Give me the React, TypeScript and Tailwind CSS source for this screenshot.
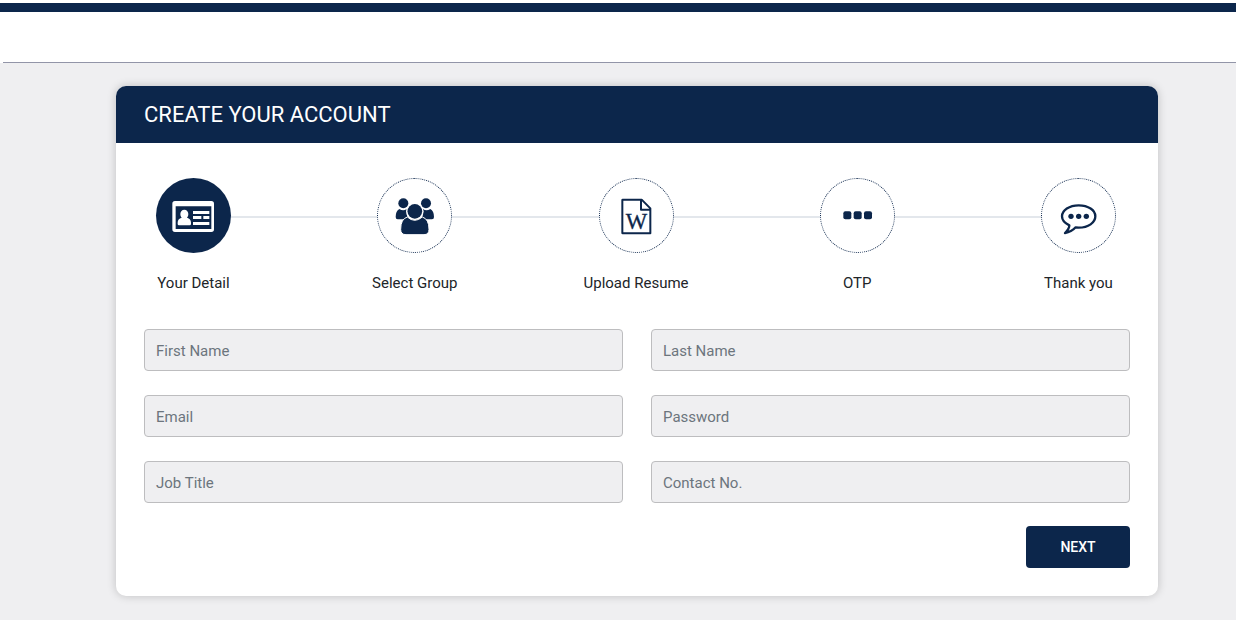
import type { ReactNode } from 'react';

function Icon({ children }: { children: ReactNode }) {
  return (
    <svg viewBox="0 0 225 225" className="size-[75px] shrink-0" fill="currentColor" aria-hidden="true">
      {children}
    </svg>
  );
}

const idCard = (
  <Icon>
    <path
      fillRule="evenodd"
      d="M57 69H166Q174 69 174 77V154Q174 162 166 162H57Q49 162 49 154V77Q49 69 57 69ZM59 85V153H166V85Z"
    />
    <path d="M85 95C92 95 97 101 97 108C97 113 95 117 93 119C101 121 105 126 105 134V138Q105 142 101 142H69Q65 142 65 138V134C65 126 69 121 77 119C75 117 73 113 73 108C73 101 78 95 85 95Z" />
    <path d="M111 99H160V108H111ZM111 114H136V123H111ZM142 114H160V123H142ZM111 132H160V141H111Z" />
  </Icon>
);

const group = (
  <Icon>
    <circle cx="79" cy="76" r="15" />
    <circle cx="147" cy="76" r="15" />
    <path d="M67 93Q79 101 89 93Q86 112 95 121L88 124H62Q56 124 56 117Q56 99 67 93Z" />
    <path d="M160 93Q148 101 138 93Q141 112 132 121L139 124H165Q171 124 171 117Q171 99 160 93Z" />
    <circle cx="113.500" cy="100" r="26" fill="white" />
    <circle cx="113.500" cy="100" r="22" />
    <path
      d="M91 117Q113 137 136 117Q156 123 156 154Q156 170 141 170H87Q71 170 71 154Q71 123 91 117Z"
      stroke="white"
      strokeWidth="3"
    />
  </Icon>
);

const wordFile = (
  <Icon>
    <path
      d="M71 65H128L154 91V166H71Q70 166 70 165V66Q70 65 71 65ZM126 65V95H154"
      fill="none"
      stroke="currentColor"
      strokeWidth="6"
      strokeLinejoin="round"
    />
    <text
      x="112"
      y="153"
      textAnchor="middle"
      fontSize="68"
      stroke="currentColor"
      strokeWidth="1"
      className="font-['Liberation_Serif',serif]"
    >
      W
    </text>
  </Icon>
);

const dots = (
  <Icon>
    <rect x="70" y="100" width="24" height="24" rx="6" />
    <rect x="101" y="100" width="24" height="24" rx="6" />
    <rect x="132" y="100" width="24" height="24" rx="6" />
  </Icon>
);

const speech = (
  <Icon>
    <path
      d="M85 142C72 136 63 127 63 115C63 97 85 82 113 82C142 82 163 97 163 115C163 134 142 149 113 149L104 148C95 158 85 163 72 165C81 157 85 151 85 142Z"
      fill="none"
      stroke="currentColor"
      strokeWidth="7"
      strokeLinejoin="round"
    />
    <circle cx="90" cy="115" r="8" />
    <circle cx="113" cy="115" r="8" />
    <circle cx="136" cy="115" r="8" />
  </Icon>
);

const steps = [
  { label: 'Your Detail', icon: idCard },
  { label: 'Select Group', icon: group },
  { label: 'Upload Resume', icon: wordFile },
  { label: 'OTP', icon: dots },
  { label: 'Thank you', icon: speech },
];

const fields = [
  { id: 'first-name', label: 'First Name', type: 'text' },
  { id: 'last-name', label: 'Last Name', type: 'text' },
  { id: 'email', label: 'Email', type: 'email' },
  { id: 'password', label: 'Password', type: 'password' },
  { id: 'job-title', label: 'Job Title', type: 'text' },
  { id: 'contact', label: 'Contact No.', type: 'tel' },
];

export default function App() {
  return (
    <div className="flex min-h-screen flex-col bg-[#efeff1] font-[Roboto,sans-serif] text-[#212529]">
      <header className="bg-white pt-[3px]">
        <div className="h-[9px] bg-[#0c264b]" />
        <div className="ml-[3px] h-[51px] border-b border-[#9295a8]" />
      </header>

      <main className="flex-1 pt-[23px] pr-[78px] pb-6 pl-[116px]">
        <section className="overflow-hidden rounded-[10px] bg-white shadow-[0_0_10px_rgba(0,0,0,0.2)]">
          <h1 className="bg-[#0c264b] px-7 py-3 text-[22px] leading-[33px] text-white">CREATE YOUR ACCOUNT</h1>

          <ol className="flex pt-[35px] pr-[42px] pl-10">
            {steps.map((step, i) => {
              const last = i === steps.length - 1;
              return (
                <li
                  key={step.label}
                  aria-current={i === 0 ? 'step' : undefined}
                  className={last ? 'flex' : 'flex flex-1'}
                >
                  <div className="flex w-[75px] shrink-0 flex-col items-center">
                    <div
                      className={
                        i === 0
                          ? 'flex size-[75px] items-center justify-center rounded-full bg-[#0c264b] text-white'
                          : 'flex size-[75px] items-center justify-center rounded-full border border-dotted border-[#0c264b] text-[#0c264b]'
                      }
                    >
                      {step.icon}
                    </div>
                    <span className="mt-[18px] text-[15px] leading-6 whitespace-nowrap">{step.label}</span>
                  </div>
                  {!last && <div className="mt-[38px] h-0.5 flex-1 bg-[#e3e7ec]" />}
                </li>
              );
            })}
          </ol>

          <form className="px-7 pt-[34px] pb-7" onSubmit={(e) => e.preventDefault()}>
            <div className="grid grid-cols-2 gap-x-7 gap-y-6">
              {fields.map((field) => (
                <div key={field.id} className="grid items-center">
                  <input
                    id={field.id}
                    name={field.id}
                    type={field.type}
                    placeholder=" "
                    className="peer col-start-1 row-start-1 h-[42px] w-full rounded border border-[#bdbdbf] bg-[#efeff1] px-3 text-[15px]"
                  />
                  <label
                    htmlFor={field.id}
                    className="z-10 col-start-1 row-start-1 cursor-text justify-self-start px-3 pt-0.5 text-[15px] leading-6 text-[#6c757d] peer-[:not(:placeholder-shown)]:invisible"
                  >
                    {field.label}
                  </label>
                </div>
              ))}
            </div>
            <div className="mt-[23px] flex justify-end">
              <button
                type="submit"
                className="h-[42px] w-[104px] rounded bg-[#0c264b] text-sm font-medium text-white"
              >
                NEXT
              </button>
            </div>
          </form>
        </section>
      </main>
    </div>
  );
}
